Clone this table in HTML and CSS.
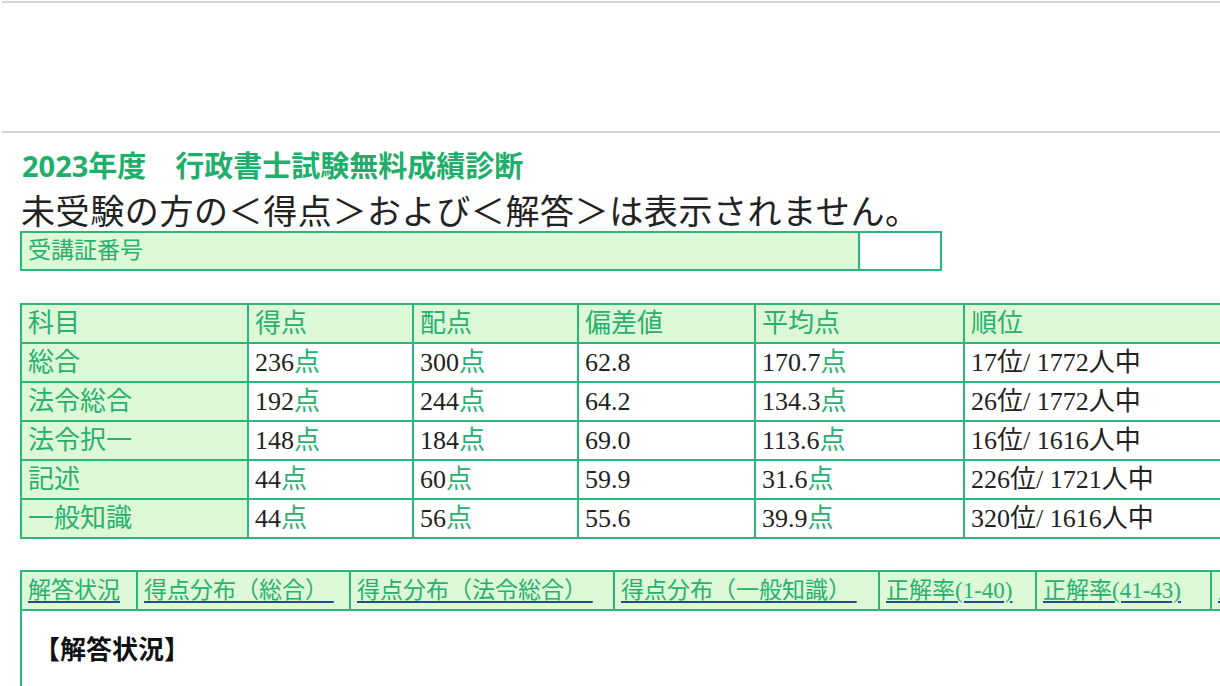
FILE: index.html
```html
<!DOCTYPE html>
<html lang="ja">
<head>
<meta charset="utf-8">
<title>2023年度 行政書士試験無料成績診断</title>
<link rel="stylesheet" href="styles.css">
</head>
<body>
<div class="topbar"></div>
<main class="page">
  <h1 class="title">2023年度　行政書士試験無料成績診断</h1>
  <p class="notice">未受験の方の＜得点＞および＜解答＞は表示されません。</p>

  <table class="idbox">
    <tr>
      <td class="idlabel">受講証番号</td>
      <td class="idvalue"></td>
    </tr>
  </table>

  <table class="scores">
    <colgroup>
      <col class="c1"><col class="c2"><col class="c3"><col class="c4"><col class="c5"><col class="c6">
    </colgroup>
    <tr class="head">
      <td>科目</td><td>得点</td><td>配点</td><td>偏差値</td><td>平均点</td><td>順位</td>
    </tr>
    <tr>
      <td class="subj">総合</td><td>236<span class="g">点</span></td><td>300<span class="g">点</span></td><td>62.8</td><td>170.7<span class="g">点</span></td><td>17位/ 1772人中</td>
    </tr>
    <tr>
      <td class="subj">法令総合</td><td>192<span class="g">点</span></td><td>244<span class="g">点</span></td><td>64.2</td><td>134.3<span class="g">点</span></td><td>26位/ 1772人中</td>
    </tr>
    <tr>
      <td class="subj">法令択一</td><td>148<span class="g">点</span></td><td>184<span class="g">点</span></td><td>69.0</td><td>113.6<span class="g">点</span></td><td>16位/ 1616人中</td>
    </tr>
    <tr>
      <td class="subj">記述</td><td>44<span class="g">点</span></td><td>60<span class="g">点</span></td><td>59.9</td><td>31.6<span class="g">点</span></td><td>226位/ 1721人中</td>
    </tr>
    <tr>
      <td class="subj">一般知識</td><td>44<span class="g">点</span></td><td>56<span class="g">点</span></td><td>55.6</td><td>39.9<span class="g">点</span></td><td>320位/ 1616人中</td>
    </tr>
  </table>

  <table class="tabs">
    <colgroup>
      <col class="t1"><col class="t2"><col class="t3"><col class="t4"><col class="t5"><col class="t6"><col class="t7">
    </colgroup>
    <tr class="tabrow">
      <td><a href="#">解答状況</a></td>
      <td><a href="#">得点分布（総合）&nbsp;</a></td>
      <td><a href="#">得点分布（法令総合）&nbsp;</a></td>
      <td><a href="#">得点分布（一般知識）&nbsp;</a></td>
      <td><a href="#">正解率(1-40)</a></td>
      <td><a href="#">正解率(41-43)</a></td>
      <td><a href="#">正解率(44-46)</a></td>
    </tr>
    <tr>
      <td class="panel" colspan="7">
        <p class="panel-title">【解答状況】</p>
        <p class="panel-sub">法令等</p>
      </td>
    </tr>
  </table>
</main>
</body>
</html>
```

FILE: styles.css
```css
html, body {
  margin: 0;
  padding: 0;
  overflow: hidden;
  background: #ffffff;
}

body {
  font-family: "Noto Sans CJK JP", "Noto Sans", sans-serif;
  color: #222222;
}

.topbar {
  margin: 1px 0 0 2px;
  height: 128px;
  border-top: 2px solid #d4d4d4;
  border-bottom: 2px solid #d4d4d4;
}

.page {
  padding-left: 20px;
}

.title {
  margin: 0 0 0 2px;
  padding-top: 11px;
  font-size: 29px;
  line-height: 44px;
  font-weight: 700;
  color: #1fae6c;
  font-family: "Noto Sans", "Noto Sans CJK JP", sans-serif;
}

.notice {
  margin: 0 0 0 1px;
  font-size: 34px;
  line-height: 43px;
  font-weight: 400;
  letter-spacing: 0.6px;
  color: #222222;
}

table {
  border-collapse: collapse;
  font-family: "Liberation Serif", "Noto Sans CJK JP", serif;
}

td {
  border: 2px solid #2bb77a;
  padding: 0 6px;
  text-align: left;
  vertical-align: middle;
}

.idbox {
  width: 922px;
  table-layout: fixed;
}

.idlabel {
  width: 824px;
  height: 36px;
  background: #dcf8d6;
  color: #28b06f;
  font-size: 23px;
  line-height: 36px;
}

.idvalue {
  background: #ffffff;
}

.scores {
  margin-top: 32px;
  table-layout: fixed;
  width: 1320px;
  font-size: 26px;
}

.c1 { width: 227px; }
.c2 { width: 165px; }
.c3 { width: 165px; }
.c4 { width: 177px; }
.c5 { width: 209px; }
.c6 { width: 377px; }

.scores td {
  height: 37px;
  line-height: 35px;
  padding: 0 6px;
  color: #222222;
  white-space: nowrap;
  overflow: hidden;
}

.scores .head td {
  background: #dcf8d6;
  color: #28b06f;
}

.scores td.subj {
  background: #dcf8d6;
  color: #28b06f;
}

.g {
  color: #28b06f;
}

.tabs {
  margin-top: 31px;
  table-layout: fixed;
  width: 1380px;
  font-size: 23px;
}

.t1 { width: 116px; }
.t2 { width: 213px; }
.t3 { width: 264px; }
.t4 { width: 265px; }
.t5 { width: 157px; }
.t6 { width: 175px; }
.t7 { width: 190px; }

.tabrow td {
  background: #dcf8d6;
  height: 37px;
  line-height: 35px;
  padding: 0 6px;
  white-space: nowrap;
  overflow: hidden;
}

.tabrow a {
  color: #28b06f;
  text-decoration: underline;
  text-decoration-color: #1f4f8f;
  text-decoration-thickness: 2px;
  text-underline-offset: 3px;
}

.panel {
  background: #ffffff;
  padding: 20px 12px 0;
  vertical-align: top;
  height: 200px;
}

.panel-title {
  margin: 0;
  font-size: 26px;
  line-height: 40px;
  font-weight: 700;
  color: #111111;
}

.panel-sub {
  margin: 12px 0 0 6px;
  font-size: 24px;
  line-height: 32px;
  color: #111111;
}
```
